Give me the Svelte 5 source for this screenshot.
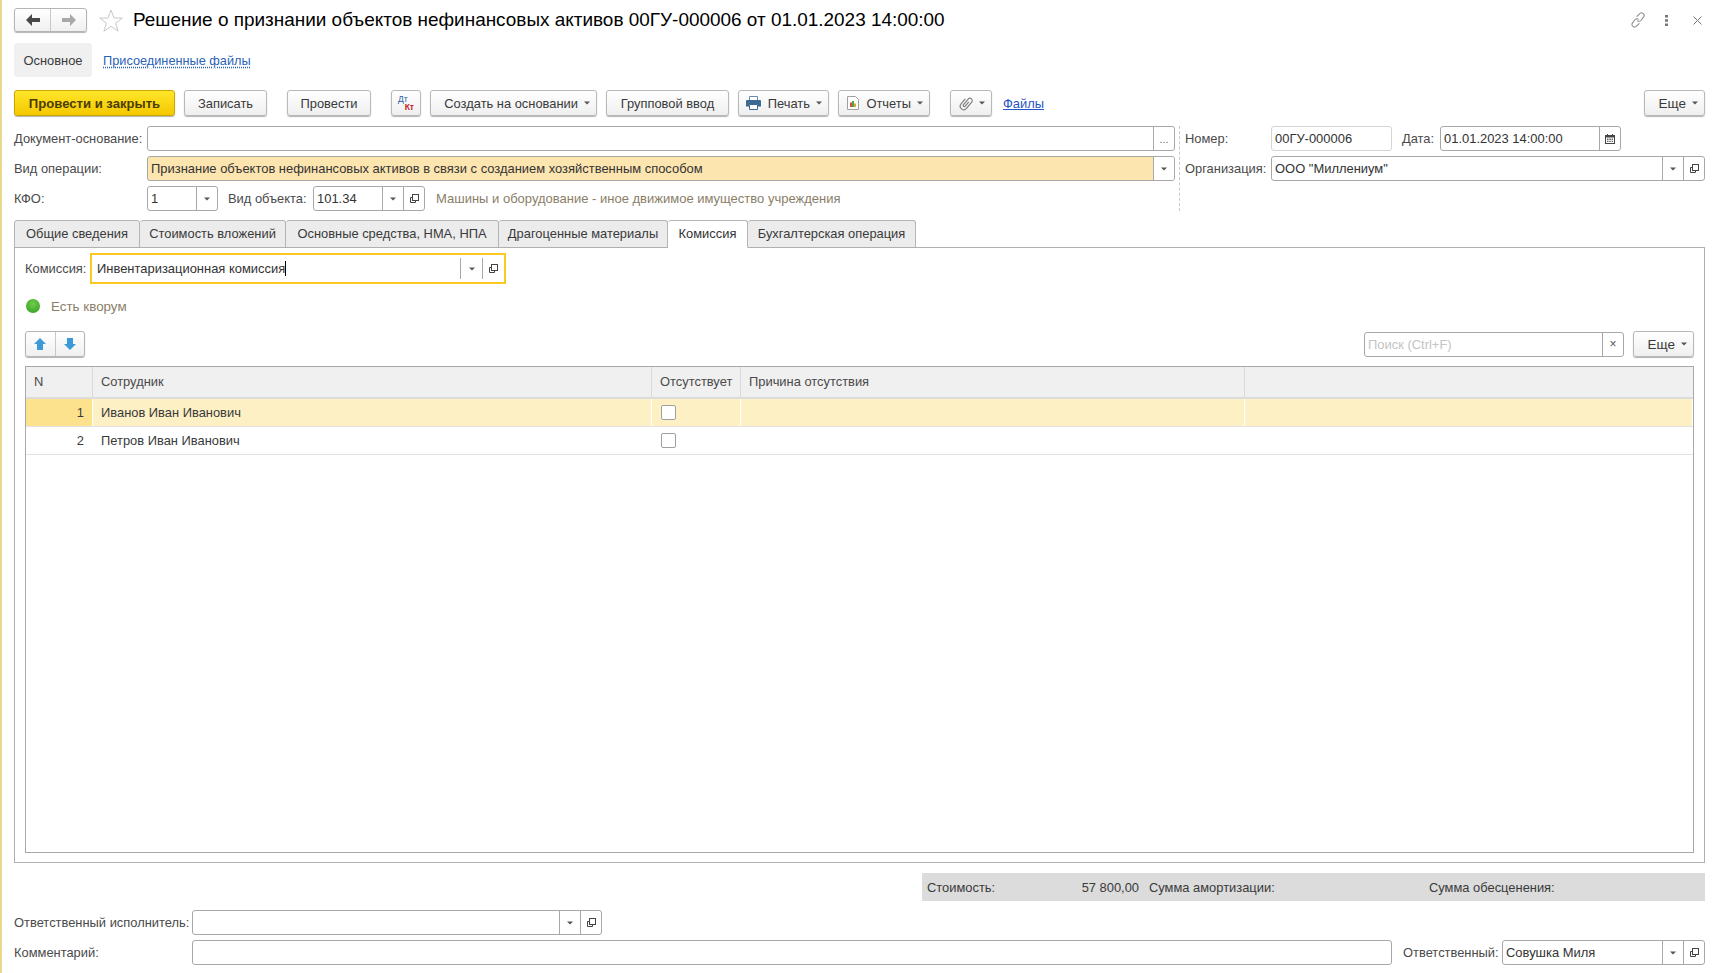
<script>
  const tabs = [
    { label: 'Общие сведения', cls: 't1' },
    { label: 'Стоимость вложений', cls: 't2' },
    { label: 'Основные средства, НМА, НПА', cls: 't3' },
    { label: 'Драгоценные материалы', cls: 't4' },
    { label: 'Комиссия', cls: 't5', active: true },
    { label: 'Бухгалтерская операция', cls: 't6' }
  ];

  const members = [
    { n: 1, name: 'Иванов Иван Иванович', current: true },
    { n: 2, name: 'Петров Иван Иванович' }
  ];
</script>

{#snippet caret()}
  <svg class="caret" width="6" height="4" viewBox="0 0 6 4"><path d="M0 .5h6L3 3.500z" fill="#555" /></svg>
{/snippet}

{#snippet openIcon()}
  <svg width="9" height="9" viewBox="0 0 9 9" fill="none" stroke="#444">
    <rect x="2.500" y="0.500" width="6" height="6" />
    <path d="M2.500 3.500h-2v5h5v-2" />
  </svg>
{/snippet}

{#snippet field(value, cls, btns = '')}
  <div class="field {cls}">
    <div class="val">{value}</div>
    {#if btns.includes('d')}<div class="fbtn">{@render caret()}</div>{/if}
    {#if btns.includes('o')}<div class="fbtn">{@render openIcon()}</div>{/if}
    {#if btns.includes('.')}<div class="fbtn dots">...</div>{/if}
    {#if btns.includes('c')}
      <div class="fbtn">
        <svg width="10" height="10" viewBox="0 0 10 10">
          <path d="M0 1h10v9H0z" fill="#444" />
          <path d="M2 0h1v2H2zM7 0h1v2H7z" fill="#444" />
          <path d="M1 3.500h8V9H1z" fill="#fff" />
          <path d="M2 4.500h1.500V6H2zM4.300 4.500h1.500V6H4.300zM6.600 4.500H8V6H6.600zM2 6.800h1.500v1.300H2zM4.300 6.800h1.500v1.300H4.300zM6.600 6.800H8v1.300H6.600z" fill="#666" />
        </svg>
      </div>
    {/if}
    {#if btns.includes('x')}<div class="fbtn clear">×</div>{/if}
  </div>
{/snippet}

<div class="page">
  <header class="top">
    <div class="nav">
      <button class="navbtn">
        <svg width="14" height="12" viewBox="0 0 14 12"><path d="M0 6 6 0v4h8v4H6v4z" fill="#484848" /></svg>
      </button>
      <button class="navbtn">
        <svg width="14" height="12" viewBox="0 0 14 12"><path d="M14 6 8 0v4H0v4h8v4z" fill="#a8a8a8" /></svg>
      </button>
    </div>
    <svg class="star" width="24" height="23" viewBox="0 0 24 23">
      <path d="M12 1l3 8h8.300l-6.700 5.200 2.500 8L12 17.300 4.900 22.200l2.500-8L.7 9H9z" fill="#fff" stroke="#c8c8c8" />
    </svg>
    <h1>Решение о признании объектов нефинансовых активов 00ГУ-000006 от 01.01.2023 14:00:00</h1>
    <div class="win-icons">
      <svg width="16" height="16" viewBox="0 0 17 17" fill="none" stroke="#888" stroke-width="1.100">
        <path d="M7 5 10 2.200a2.600 2.600 0 0 1 4.500 3L11.500 9a2.600 2.600 0 0 1-3.800.2" />
        <path d="M10 12l-3 2.800a2.600 2.600 0 0 1-4.500-3L5.500 8a2.600 2.600 0 0 1 3.800-.2" />
      </svg>
      <svg class="dots-ic" width="3" height="11" viewBox="0 0 3 11"><path d="M0 0h3v2.500H0zM0 4.200h3v2.500H0zM0 8.500h3V11H0z" fill="#777" /></svg>
      <svg class="close-ic" width="9" height="9" viewBox="0 0 9 9" fill="none" stroke="#777"><path d="M.5.500l8 8M8.500.500l-8 8" /></svg>
    </div>
  </header>

  <nav class="sections">
    <div class="sec active">Основное</div>
    <a class="sec-link" href="#files">Присоединенные файлы</a>
  </nav>

  <div class="toolbar">
    <button class="btn primary b-post">Провести и закрыть</button>
    <button class="btn b-save">Записать</button>
    <button class="btn b-run">Провести</button>
    <button class="btn b-dtkt"><span class="dt">Дт</span><span class="kt">Кт</span></button>
    <button class="btn drop b-create">Создать на основании {@render caret()}</button>
    <button class="btn b-group">Групповой ввод</button>
    <button class="btn drop b-print">
      <svg class="lead-ic" width="15" height="14" viewBox="0 0 15 14">
        <path d="M3.500.500h8v4h-8z" fill="#fff" stroke="#6a8aa6" />
        <path d="M1 4h13a1 1 0 0 1 1 1v5.500h-3V8.500H3v2H0V5a1 1 0 0 1 1-1z" fill="#3d6a92" />
        <path d="M3.500 8.500h8v5h-8z" fill="#fff" stroke="#3d6a92" />
      </svg>
      Печать {@render caret()}
    </button>
    <button class="btn drop b-report">
      <svg class="lead-ic" width="12" height="14" viewBox="0 0 12 14">
        <path d="M.5.500h8l3 3v10H.5z" fill="#fff" stroke="#a0a0a0" />
        <path d="M3 6.500h2V11H3z" fill="#d84a3a" /><path d="M5 5h2v6H5z" fill="#4aa64a" /><path d="M7 7.500h2V11H7z" fill="#d8a92d" />
      </svg>
      Отчеты {@render caret()}
    </button>
    <button class="btn drop b-clip">
      <svg width="14" height="15" viewBox="0 0 14 15" fill="none" stroke="#808080" stroke-width="1.200">
        <g transform="rotate(40 7 7.500)">
          <path d="M3.500 4.500v6.500a3.500 3.500 0 0 0 7 0V2.800a2.300 2.300 0 0 0-4.600 0V10a1.100 1.100 0 0 0 2.200 0V4.500" />
        </g>
      </svg>
      {@render caret()}
    </button>
    <a class="files" href="#files">Файлы</a>
    <button class="btn drop b-more">Еще {@render caret()}</button>
  </div>

  <div class="head">
    <div class="head-left">
      <div class="row">
        <span class="lbl lw">Документ-основание:</span>
        {@render field('', 'grow', '.')}
      </div>
      <div class="row">
        <span class="lbl lw">Вид операции:</span>
        {@render field('Признание объектов нефинансовых активов в связи с созданием хозяйственным способом', 'grow marked', 'd')}
      </div>
      <div class="row">
        <span class="lbl lw">КФО:</span>
        {@render field('1', 'w-kfo', 'd')}
        <span class="lbl obj-lbl">Вид объекта:</span>
        {@render field('101.34', 'w-obj', 'do')}
        <span class="hint obj-hint">Машины и оборудование - иное движимое имущество учреждения</span>
      </div>
    </div>
    <div class="head-right">
      <div class="row">
        <span class="lbl rw">Номер:</span>
        {@render field('00ГУ-000006', 'w-num readonly')}
        <span class="lbl date-lbl">Дата:</span>
        {@render field('01.01.2023 14:00:00', 'w-date', 'c')}
      </div>
      <div class="row">
        <span class="lbl rw">Организация:</span>
        {@render field('ООО "Миллениум"', 'grow', 'do')}
      </div>
    </div>
  </div>

  <div class="tabs">
    {#each tabs as t}
      <div class="tab {t.cls}" class:active={t.active}>{t.label}</div>
    {/each}
  </div>

  <section class="panel">
    <div class="row">
      <span class="lbl com-lbl">Комиссия:</span>
      <div class="field focus">
        <div class="val"><span class="typed">Инвентаризационная комиссия</span></div>
        <div class="fbtn">{@render caret()}</div>
        <div class="fbtn">{@render openIcon()}</div>
      </div>
    </div>

    <div class="quorum"><span class="led"></span><span class="hint">Есть кворум</span></div>

    <div class="tbl-tools">
      <div class="updown">
        <button class="navbtn small">
          <svg width="12" height="12" viewBox="0 0 12 12"><path d="M6 0l6 6H9v6H3V6H0z" fill="#3d9ad9" /></svg>
        </button>
        <button class="navbtn small">
          <svg width="12" height="12" viewBox="0 0 12 12"><path d="M6 12l6-6H9V0H3v6H0z" fill="#3d9ad9" /></svg>
        </button>
      </div>
      <div class="field search">
        <div class="val placeholder">Поиск (Ctrl+F)</div>
        <div class="fbtn clear">×</div>
      </div>
      <button class="btn drop b-more2">Еще {@render caret()}</button>
    </div>

    <div class="grid">
      <div class="tr thead">
        <div class="td">N</div>
        <div class="td">Сотрудник</div>
        <div class="td">Отсутствует</div>
        <div class="td">Причина отсутствия</div>
        <div class="td"></div>
      </div>
      {#each members as m}
        <div class="tr" class:current={m.current}>
          <div class="td num">{m.n}</div>
          <div class="td">{m.name}</div>
          <div class="td"><span class="check"></span></div>
          <div class="td"></div>
          <div class="td"></div>
        </div>
      {/each}
    </div>
  </section>

  <div class="totals">
    <span class="tot-a">Стоимость:</span>
    <span class="tot-b">57 800,00</span>
    <span class="tot-c">Сумма амортизации:</span>
    <span>Сумма обесценения:</span>
  </div>

  <div class="row foot-1">
    <span class="lbl fw">Ответственный исполнитель:</span>
    {@render field('', 'w-exec', 'do')}
  </div>
  <div class="row foot-2">
    <span class="lbl fw">Комментарий:</span>
    {@render field('', 'grow')}
    <span class="lbl resp-lbl">Ответственный:</span>
    {@render field('Совушка Миля', 'w-resp', 'do')}
  </div>
</div>

<style>
  :global(body) {
    margin: 0;
    background: #fff;
  }

  .page {
    box-sizing: border-box;
    width: 1723px;
    height: 973px;
    padding: 8px 18px 0 12px;
    border-left: 2px solid #ead98c;
    display: flex;
    flex-direction: column;
    font: 12.9px "Liberation Sans", Arial, sans-serif;
    color: #3a3a3a;
    overflow: hidden;
  }

  button {
    font: inherit;
    color: inherit;
    padding: 0;
  }

  /* header */
  .top {
    display: flex;
    align-items: center;
    height: 24px;
  }

  .nav,
  .updown {
    display: flex;
    border: 1px solid #b5b5b5;
    border-radius: 3px;
    box-shadow: 0 1px 1px rgba(0, 0, 0, 0.3);
    background: linear-gradient(#fff, #f0f0f0);
  }

  .nav {
    width: 73px;
    height: 24px;
    box-sizing: border-box;
  }

  .navbtn {
    flex: 1;
    border: 0;
    background: none;
    display: flex;
    align-items: center;
    justify-content: center;
  }

  .navbtn + .navbtn {
    border-left: 1px solid #c8c8c8;
  }

  .star {
    margin-left: 12px;
  }

  h1 {
    margin: 0 0 0 10px;
    font-size: 18.95px;
    font-weight: 400;
    color: #000;
    white-space: nowrap;
  }

  .win-icons {
    margin-left: auto;
    display: flex;
    align-items: center;
    padding-right: 3px;
  }

  .dots-ic { margin-left: 19px; }
  .close-ic { margin-left: 25px; }

  /* sections */
  .sections {
    display: flex;
    align-items: center;
    height: 34px;
    margin-top: 11px;
  }

  .sec {
    display: flex;
    align-items: center;
    justify-content: center;
    height: 100%;
    width: 78px;
    background: #f0f0f0;
    border-radius: 3px;
  }

  .sec-link {
    margin-left: 11px;
    font-size: 12.75px;
    color: #2a62b8;
    text-decoration: underline dotted;
    text-underline-offset: 2px;
  }

  /* toolbar */
  .toolbar {
    display: flex;
    align-items: center;
    margin-top: 13px;
    height: 26px;
    gap: 9px;
  }

  .btn {
    box-sizing: border-box;
    height: 26px;
    display: flex;
    align-items: center;
    justify-content: center;
    gap: 6px;
    border: 1px solid #b8b8b8;
    border-radius: 3px;
    background: linear-gradient(#fff, #efefef);
    box-shadow: 0 1px 1px rgba(0, 0, 0, 0.3);
    white-space: nowrap;
  }

  .drop {
    justify-content: flex-end;
    padding-right: 6px;
  }

  .lead-ic { margin-right: 1px; }

  .primary {
    background: linear-gradient(#ffe62a, #f4c800);
    border-color: #cba800;
    font-size: 13.1px;
    font-weight: 700;
    color: #4b3d00;
  }

  .b-post { width: 161px; }
  .b-save { width: 83px; }
  .b-run { width: 84px; margin-left: 11px; }
  .b-dtkt { width: 30px; margin-left: 11px; flex-direction: column; gap: 0; font-size: 8.5px; line-height: 8px; }
  .b-create { width: 167px; }
  .b-group { width: 123px; }
  .b-print { width: 91px; }
  .b-report { width: 92px; }
  .b-clip { width: 42px; margin-left: 11px; }
  .b-more { width: 61px; margin-left: auto; font-size: 13.5px; }
  .b-more2 { width: 61px; margin-left: 9px; font-size: 13.5px; }

  .dt { color: #2a62a8; align-self: flex-start; margin-left: 6px; }
  .kt { color: #c81e1e; font-weight: 700; align-self: flex-end; margin-right: 6px; }

  .files {
    margin-left: 2px;
    color: #1f55c4;
  }

  /* head form */
  .head {
    display: flex;
    margin-top: 10px;
  }

  .head-left {
    width: 1161px;
    display: flex;
    flex-direction: column;
    gap: 5px;
    box-sizing: border-box;
  }

  .head-right {
    flex: 1;
    margin-left: 4px;
    padding-left: 5px;
    border-left: 1px dashed #c8c8c8;
    display: flex;
    flex-direction: column;
    gap: 5px;
  }

  .row {
    display: flex;
    align-items: center;
    height: 25px;
  }

  .lbl {
    white-space: nowrap;
    color: #4a4a4a;
  }

  .lw { width: 133px; flex: none; }
  .rw { width: 86px; flex: none; }
  .fw { width: 178px; flex: none; }
  .obj-lbl { margin-left: 10px; width: 85px; }
  .date-lbl { margin-left: 10px; width: 38px; }
  .com-lbl { width: 65px; }
  .resp-lbl { margin-left: 11px; width: 99px; }

  .hint { color: #8a7e68; white-space: nowrap; font-size: 13px; }
  .obj-hint { margin-left: 11px; }

  /* fields */
  .field {
    box-sizing: border-box;
    display: flex;
    align-items: stretch;
    height: 25px;
    border: 1px solid #a8a8a8;
    border-radius: 3px;
    background: #fff;
    overflow: hidden;
  }

  .grow { flex: 1; }
  .val {
    flex: 1;
    display: flex;
    align-items: center;
    padding-left: 3px;
    white-space: nowrap;
    color: #333;
    min-width: 0;
    font-size: 12.95px;
  }

  .fbtn {
    flex: none;
    width: 20px;
    display: flex;
    align-items: center;
    justify-content: center;
    border-left: 1px solid #a8a8a8;
  }

  .dots { color: #666; font-size: 11px; }
  .clear { color: #555; font-size: 12px; }

  .marked { background: #fde5b0; }
  .marked .fbtn { background: #fff; }
  .readonly { border-color: #d4d4d4; }

  .w-kfo { width: 71px; }
  .w-obj { width: 112px; }
  .w-num { width: 121px; }
  .w-date { width: 181px; }
  .w-exec { width: 410px; }
  .w-resp { width: 203px; }

  .focus {
    width: 416px;
    height: 31px;
    border: 2px solid #fcc923;
    border-radius: 0;
  }

  .focus .val { padding-left: 5px; }
  .focus .fbtn { width: 21px; border-left-color: #a8a8a8; margin: 3px 0; }
  .typed { border-right: 1px solid #000; line-height: 15px; }

  /* tabs */
  .tabs {
    display: flex;
    margin-top: 9px;
    margin-bottom: -1px;
  }

  .tab {
    box-sizing: border-box;
    height: 28px;
    padding-bottom: 1px;
    display: flex;
    align-items: center;
    justify-content: center;
    white-space: nowrap;
    background: #ececec;
    border: 1px solid #b5b5b5;
    border-left-width: 0;
    border-radius: 3px 3px 0 0;
  }

  .tab:first-child { border-left-width: 1px; }
  .tab.active {
    position: relative;
    background: #fff;
    border-bottom-color: #fff;
    color: #333;
  }

  .t1 { width: 126px; }
  .t2 { width: 146px; }
  .t3 { width: 213px; }
  .t4 { width: 169px; }
  .t5 { width: 80px; }
  .t6 { width: 168px; }

  /* panel */
  .panel {
    box-sizing: border-box;
    height: 616px;
    padding: 0 10px 9px;
    border: 1px solid #b0b0b0;
    display: flex;
    flex-direction: column;
  }

  .panel > .row { height: 31px; margin-top: 5px; }

  .quorum {
    display: flex;
    align-items: center;
    gap: 11px;
    margin-top: 15px;
    height: 14px;
  }

  .quorum .hint { font-size: 13.4px; }

  .led {
    width: 14px;
    height: 14px;
    margin-left: 1px;
    border-radius: 50%;
    background: radial-gradient(circle at 50% 35%, #6fce4a, #2f9a22);
  }

  .tbl-tools {
    display: flex;
    align-items: center;
    margin-top: 18px;
    height: 26px;
  }

  .updown {
    width: 60px;
    height: 26px;
    box-sizing: border-box;
  }

  .search {
    width: 260px;
    margin-left: auto;
  }

  .placeholder { color: #c4c4c4; }

  /* table */
  .grid {
    flex: 1;
    margin-top: 9px;
    border: 1px solid #a8a8a8;
  }

  .tr {
    box-sizing: border-box;
    display: grid;
    grid-template-columns: 67px 559px 89px 504px 1fr;
    height: 28px;
    border-bottom: 1px solid #e2e2e2;
  }

  .td {
    display: flex;
    align-items: center;
    padding-left: 8px;
    border-right: 1px solid #fff;
    white-space: nowrap;
  }

  .thead {
    height: 32px;
    background: #f0f0f0;
    border-bottom: 2px solid #dcdcdc;
  }

  .thead .td {
    padding-bottom: 2px;
    border-right-color: #d8d8d8;
    color: #4a4a4a;
  }

  .thead .td:last-child { border-right: 0; }

  .num {
    justify-content: flex-end;
    padding: 0 8px 0 0;
  }

  .current { background: #fdf0c5; }
  .current .num { background: #fde28e; }

  .check {
    box-sizing: border-box;
    width: 15px;
    height: 15px;
    margin-left: 1px;
    border: 1px solid #a0a0a0;
    border-radius: 2px;
    background: #fff;
  }

  /* footer */
  .totals {
    box-sizing: border-box;
    display: flex;
    align-items: center;
    width: 783px;
    height: 28px;
    margin: 10px 0 0 auto;
    padding-left: 5px;
    background: #dcdcdc;
  }

  .tot-a { width: 140px; }
  .tot-b { width: 72px; text-align: right; }
  .tot-c { margin-left: 10px; width: 280px; }

  .foot-1 { margin-top: 9px; }
  .foot-2 { margin-top: 5px; }
</style>
